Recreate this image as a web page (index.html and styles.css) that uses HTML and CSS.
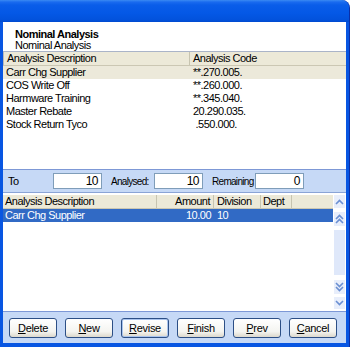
FILE: index.html
```html
<!DOCTYPE html>
<html lang="en">
<head>
    <meta charset="UTF-8">
    <meta name="viewport" content="width=device-width, initial-scale=1.0">
    <title>Nominal Analysis</title>
    <link rel="stylesheet" href="styles.css">
</head>
<body>

    <div class="window">
        <div class="titlebar"></div>

        <div class="client">
            <!-- Heading -->
            <div class="heading">
                <div class="heading-title">Nominal Analysis</div>
                <div class="heading-sub">Nominal Analysis</div>
            </div>

            <!-- Analysis codes -->
            <div class="code-list">
                <div class="code-row code-head">
                    <span class="col-desc">Analysis Description</span>
                    <span class="col-code">Analysis Code</span>
                </div>
                <div class="code-row current">
                    <span class="col-desc">Carr Chg Supplier</span>
                    <span class="col-code">**.270.005.</span>
                </div>
                <div class="code-row">
                    <span class="col-desc">COS Write Off</span>
                    <span class="col-code">**.260.000.</span>
                </div>
                <div class="code-row">
                    <span class="col-desc">Harmware Training</span>
                    <span class="col-code">**.345.040.</span>
                </div>
                <div class="code-row">
                    <span class="col-desc">Master Rebate</span>
                    <span class="col-code">20.290.035.</span>
                </div>
                <div class="code-row">
                    <span class="col-desc">Stock Return Tyco</span>
                    <span class="col-code">&nbsp;.550.000.</span>
                </div>
            </div>

            <!-- Totals -->
            <div class="totals">
                <span class="lbl lbl-to">To</span>
                <span class="field">10</span>
                <span class="lbl">Analysed:</span>
                <span class="field">10</span>
                <span class="lbl">Remaining</span>
                <span class="field">0</span>
            </div>

            <!-- Analysis lines -->
            <div class="lines">
                <div class="lines-table">
                    <div class="line-row line-head">
                        <span class="c-desc">Analysis Description</span>
                        <span class="c-amount">Amount</span>
                        <span class="c-div">Division</span>
                        <span class="c-dept">Dept</span>
                        <span class="c-fill"></span>
                    </div>
                    <div class="line-row selected">
                        <span class="c-desc">Carr Chg Supplier</span>
                        <span class="c-amount">10.00</span>
                        <span class="c-div">10</span>
                        <span class="c-dept"></span>
                        <span class="c-fill"></span>
                    </div>
                </div>
                <div class="scroller">
                    <div class="sbtn sbtn-up">
                        <svg width="9" height="6" viewBox="0 0 9 6"><polyline points="1,5 4.5,1.5 8,5" /></svg>
                    </div>
                    <div class="sbtn sbtn-pgup">
                        <svg width="9" height="10" viewBox="0 0 9 10"><polyline points="1,5 4.5,1.5 8,5" /><polyline points="1,9 4.5,5.5 8,9" /></svg>
                    </div>
                    <div class="track"></div>
                    <div class="sbtn sbtn-pgdn">
                        <svg width="9" height="10" viewBox="0 0 9 10"><polyline points="1,1 4.5,4.5 8,1" /><polyline points="1,5 4.5,8.5 8,5" /></svg>
                    </div>
                    <div class="sbtn sbtn-dn">
                        <svg width="9" height="6" viewBox="0 0 9 6"><polyline points="1,1 4.5,4.5 8,1" /></svg>
                    </div>
                </div>
            </div>

            <!-- Buttons -->
            <div class="buttons">
                <button class="btn"><u>D</u>elete</button>
                <button class="btn"><u>N</u>ew</button>
                <button class="btn default"><u>R</u>evise</button>
                <button class="btn"><u>F</u>inish</button>
                <button class="btn"><u>P</u>rev</button>
                <button class="btn"><u>C</u>ancel</button>
            </div>
        </div>
    </div>

</body>
</html>
```

FILE: styles.css
```css
body {
    margin: 0;
    background-color: #fff;
    font-family: "Liberation Sans", Arial, sans-serif;
    font-size: 11px;
    letter-spacing: -0.5px;
    color: #000;
}
.window {
    width: 350px;
    height: 347px;
    box-sizing: border-box;
    display: flex;
    flex-direction: column;
    background-color: #0856e2;
    border-right: 1px solid #0a2fa8;
    border-top-right-radius: 8px;
    padding: 0 3px 4px 3px;
}
.titlebar {
    height: 22px;
    margin: 0 -3px;
    border-top-right-radius: 8px;
    background: linear-gradient(#3b8af2 0, #1a6bef 2px, #0a5de9 5px, #0458e6 60%, #0252dc 90%, #0149cf 100%);
    flex-shrink: 0;
}
.client {
    flex: 1;
    display: flex;
    flex-direction: column;
    background-color: #fff;
}
.heading {
    height: 30px;
    box-sizing: border-box;
    padding: 7px 0 0 12px;
    line-height: 11px;
    border-bottom: 1px solid #aab4c8;
}
.heading-title {
    font-weight: bold;
}
.code-list {
    height: 117px;
    border-bottom: 1px solid #7d98d6;
}
.code-row {
    display: flex;
    height: 13px;
    line-height: 13px;
}
.code-row .col-desc {
    width: 184px;
    padding-left: 3px;
}
.code-row .col-code {
    padding-left: 3px;
}
.code-head {
    background-color: #ece9d8;
    border-bottom: 1px solid #cbc7b3;
    border-left: 1px solid #b9b9b9;
}
.code-head .col-desc {
    width: 182px;
    border-right: 1px solid #c7c4b0;
}
.code-row.current {
    background-color: #ece9da;
}
.totals {
    height: 22px;
    display: flex;
    align-items: center;
    padding-left: 5px;
    background-color: #c6d9f6;
    border-bottom: 1px solid #8aa4d6;
}
.lbl {
    flex: none;
    width: 43px;
    margin-left: 9px;
    white-space: nowrap;
    font-size: 10px;
    letter-spacing: -0.7px;
}
.lbl-to {
    width: 45px;
    margin-left: 0;
    font-size: 11px;
    letter-spacing: -0.5px;
}
.field {
    flex: none;
    width: 49px;
    height: 16px;
    box-sizing: border-box;
    line-height: 14px;
    padding-right: 3px;
    text-align: right;
    background-color: #fff;
    border: 1px solid #7f9db9;
    font-size: 12px;
}
.lines {
    height: 118px;
    display: flex;
    border-bottom: 1px solid #7d98d6;
}
.lines-table {
    flex: 1;
    padding-top: 2px;
}
.line-row {
    display: flex;
    height: 13px;
    line-height: 13px;
}
.line-row span {
    box-sizing: border-box;
    white-space: nowrap;
}
.c-desc {
    width: 154px;
    padding-left: 2px;
}
.c-amount {
    width: 57px;
    text-align: right;
    padding-right: 3px;
}
.c-div {
    width: 47px;
    padding-left: 3px;
}
.c-dept {
    width: 31px;
    padding-left: 2px;
}
.c-fill {
    flex: 1;
}
.line-head {
    background-color: #ece9d8;
    border-bottom: 1px solid #cbc7b3;
}
.line-head span {
    border-right: 1px solid #c7c4b0;
}
.line-head .c-fill {
    border-right: none;
}
.line-row.selected {
    background-color: #316ac5;
    color: #fff;
}
.scroller {
    width: 13px;
    display: flex;
    flex-direction: column;
    align-items: center;
    padding-top: 2px;
}
.sbtn {
    width: 11px;
    display: flex;
    align-items: center;
    justify-content: center;
    background-color: #e8eefb;
}
.sbtn svg polyline {
    fill: none;
    stroke: #6a8fd2;
    stroke-width: 1.6;
}
.sbtn-up {
    height: 13px;
}
.sbtn-pgup {
    height: 14px;
    margin-top: 4px;
}
.track {
    width: 11px;
    height: 45px;
    margin-top: 4px;
    background-color: #dfe8fa;
}
.sbtn-pgdn {
    height: 14px;
    margin-top: 5px;
}
.sbtn-dn {
    height: 12px;
    margin-top: 3px;
}
.buttons {
    flex: 1;
    display: flex;
    gap: 8px;
    padding: 6px 0 0 6px;
    background-color: #c6d9f6;
}
.btn {
    width: 48px;
    height: 20px;
    padding: 0;
    font-family: "Liberation Sans", Arial, sans-serif;
    font-size: 11px;
    letter-spacing: -0.3px;
    color: #000;
    border: 1px solid #2c4f86;
    border-radius: 3px;
    background: linear-gradient(#ffffff, #f4f4f0 70%, #dcd8cc);
}
.btn.default {
    box-shadow: inset 0 0 0 1px #a9c4ee;
}
```
